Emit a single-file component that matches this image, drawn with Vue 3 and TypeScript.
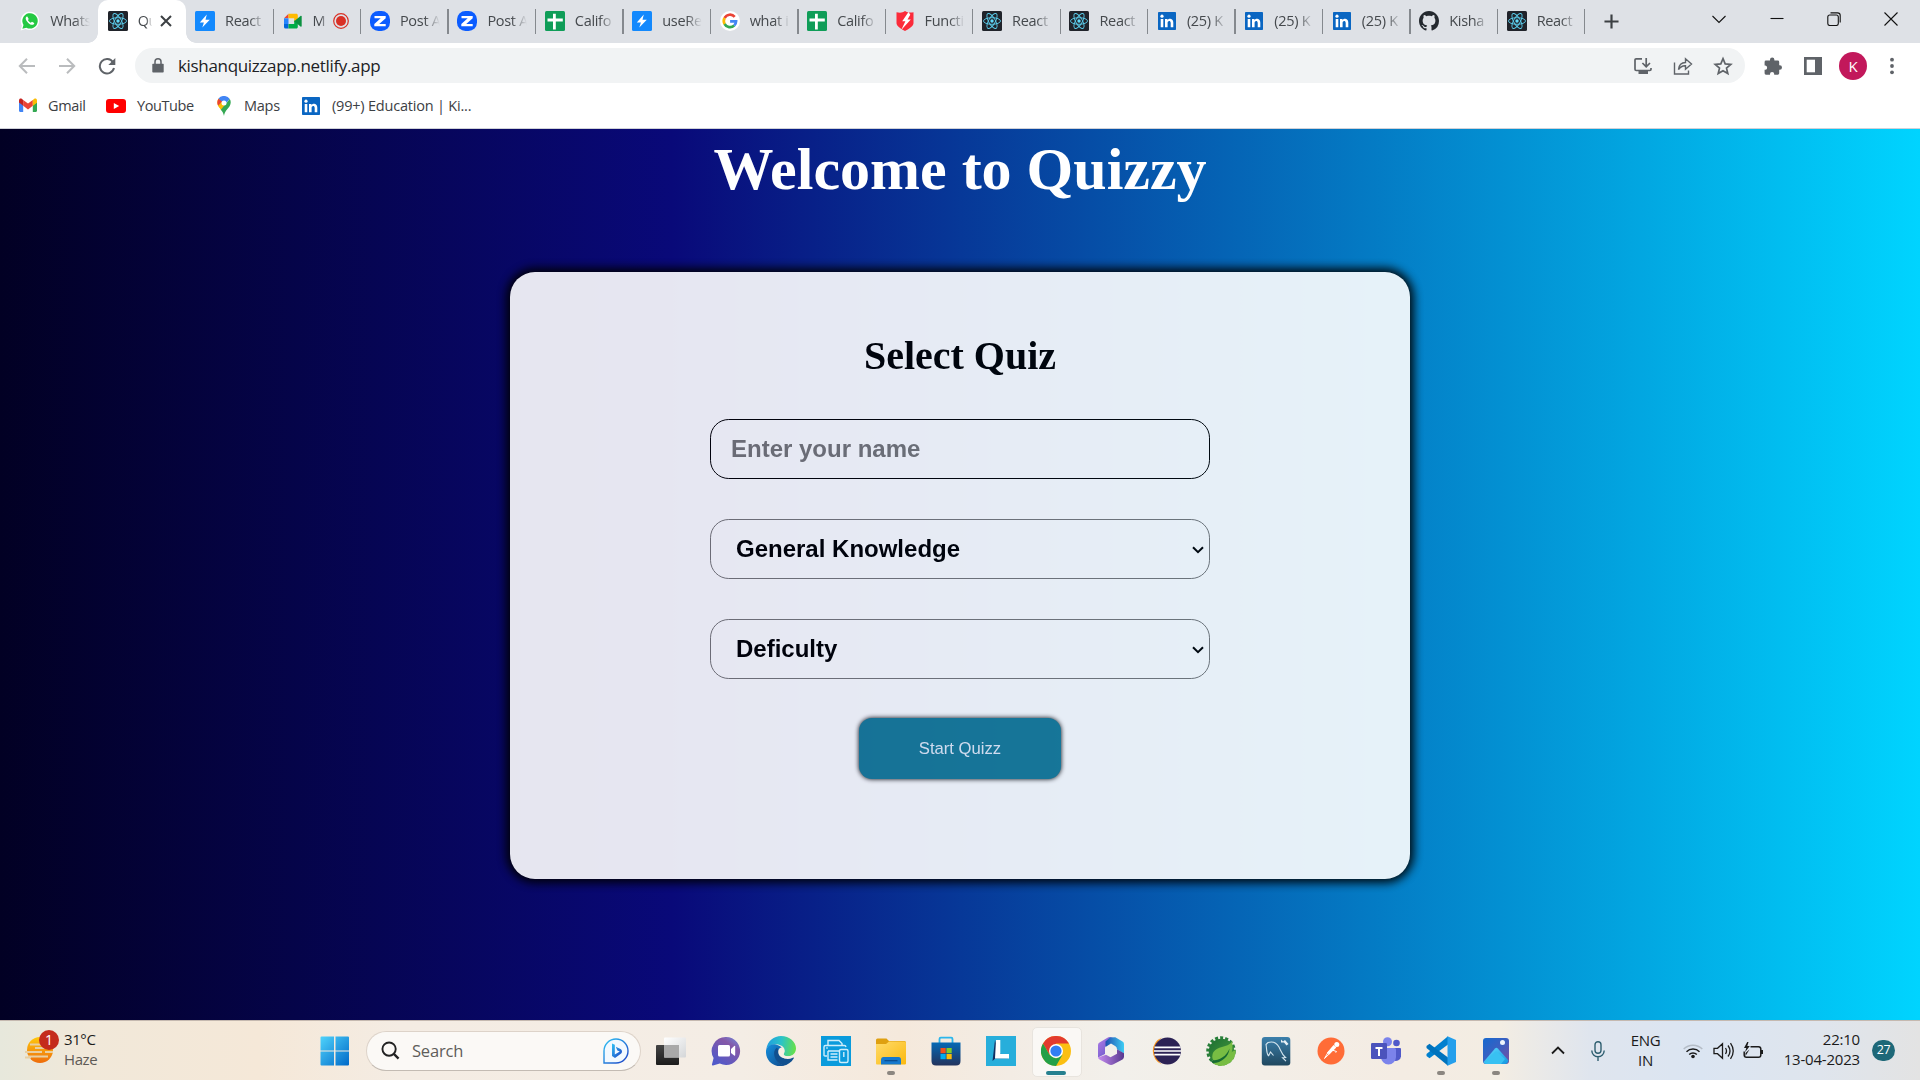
<script setup lang="ts">
import { ref } from 'vue'

interface Tab { icon: string; title: string; active?: boolean; recording?: boolean }
interface Bookmark { icon: string; label: string; width: number }
interface Pinned { icon: string; active?: boolean; running?: boolean }

const tabs: Tab[] = [
  { icon: 'whatsapp', title: 'Whats' },
  { icon: 'react', title: 'Qu', active: true },
  { icon: 'bolt', title: 'React' },
  { icon: 'meet', title: 'M', recording: true },
  { icon: 'zed', title: 'Post A' },
  { icon: 'zed', title: 'Post A' },
  { icon: 'sheets', title: 'Califo' },
  { icon: 'bolt', title: 'useRe' },
  { icon: 'google', title: 'what i' },
  { icon: 'sheets', title: 'Califo' },
  { icon: 'shield', title: 'Functi' },
  { icon: 'react', title: 'React' },
  { icon: 'react', title: 'React' },
  { icon: 'linkedin', title: '(25) K' },
  { icon: 'linkedin', title: '(25) K' },
  { icon: 'linkedin', title: '(25) K' },
  { icon: 'github', title: 'Kisha' },
  { icon: 'react', title: 'React' },
]

const bookmarks: Bookmark[] = [
  { icon: 'gmail', label: 'Gmail', width: 18 },
  { icon: 'youtube', label: 'YouTube', width: 20 },
  { icon: 'maps', label: 'Maps', width: 18 },
  { icon: 'linkedin', label: '(99+) Education | Ki...', width: 20 },
]

const pinned: Pinned[] = [
  { icon: 'taskview' }, { icon: 'chat' }, { icon: 'edge' }, { icon: 'printer' },
  { icon: 'folder', running: true }, { icon: 'store' }, { icon: 'lapp' },
  { icon: 'chrome', active: true }, { icon: 'm365' }, { icon: 'eclipse' },
  { icon: 'spring' }, { icon: 'mysql' }, { icon: 'postman' }, { icon: 'teams' },
  { icon: 'vscode', running: true }, { icon: 'photos', running: true },
]

const name = ref('')
const category = ref('General Knowledge')
const difficulty = ref('Deficulty')
</script>

<template>
  <div class="screen">
    <svg class="sprite" aria-hidden="true">
      <defs>
        <linearGradient id="gWin" x1="0" y1="0" x2="1" y2="1"><stop offset="0" stop-color="#4fd3fb" /><stop offset="1" stop-color="#0069c8" /></linearGradient>
        <linearGradient id="gChat" x1="1" y1="0" x2="0.3" y2="1"><stop offset="0" stop-color="#6f8fe0" /><stop offset=".35" stop-color="#8458a8" /><stop offset="1" stop-color="#5059c9" /></linearGradient>
        <linearGradient id="gEdge" x1="0" y1=".3" x2="1" y2=".4"><stop offset="0" stop-color="#1f9de0" /><stop offset=".5" stop-color="#2bc3c8" /><stop offset="1" stop-color="#66e04a" /></linearGradient>
        <linearGradient id="gEdge2" x1="0" y1="0" x2="1" y2="1"><stop offset="0" stop-color="#1490df" /><stop offset="1" stop-color="#114a8b" /></linearGradient>
        <linearGradient id="gFold" x1="0" y1="0" x2="1" y2="1"><stop offset="0" stop-color="#ffdb6b" /><stop offset="1" stop-color="#fbb90e" /></linearGradient>
        <linearGradient id="gStore" x1="0" y1="0" x2="0" y2="1"><stop offset="0" stop-color="#0669b5" /><stop offset="1" stop-color="#23335d" /></linearGradient>
        <linearGradient id="gMsA" x1="0" y1="0" x2="1" y2="1"><stop offset="0" stop-color="#b07be6" /><stop offset="1" stop-color="#5b52c4" /></linearGradient>
        <linearGradient id="gMsB" x1="0" y1="0" x2="1" y2="0"><stop offset="0" stop-color="#1e4fb0" /><stop offset="1" stop-color="#3ecdf4" /></linearGradient>
        <linearGradient id="gMsC" x1="0" y1="0" x2="1" y2="0"><stop offset="0" stop-color="#c68cf0" /><stop offset="1" stop-color="#57398f" /></linearGradient>
        <linearGradient id="gSql" x1="0" y1="0" x2="0" y2="1"><stop offset="0" stop-color="#3b7fab" /><stop offset="1" stop-color="#20485f" /></linearGradient>
        <linearGradient id="gSun" x1="0" y1="0" x2="0" y2="1"><stop offset="0" stop-color="#ffc90e" /><stop offset="1" stop-color="#ee6c0b" /></linearGradient>
        <linearGradient id="gPhoto" x1="0" y1="0" x2="1" y2="1"><stop offset="0" stop-color="#1569cf" /><stop offset=".5" stop-color="#3c5fc0" /><stop offset="1" stop-color="#7a4fa0" /></linearGradient>
        <linearGradient id="gMount" x1="0" y1="0" x2="1" y2="1"><stop offset="0" stop-color="#5fdcff" /><stop offset="1" stop-color="#1497e0" /></linearGradient>
        <linearGradient id="gBing" x1="0" y1="0" x2="1" y2="1"><stop offset="0" stop-color="#2fc3f4" /><stop offset="1" stop-color="#1d3fc4" /></linearGradient>
        <linearGradient id="gWhite" x1="0" y1="0" x2="1" y2="1"><stop offset="0" stop-color="#ffffff" /><stop offset="1" stop-color="#d4d6d8" /></linearGradient>
        <linearGradient id="gDark" x1="0" y1="0" x2="0" y2="1"><stop offset="0" stop-color="#444444" /><stop offset="1" stop-color="#1c1c1c" /></linearGradient>
        <linearGradient id="gLeaf" x1="0" y1="0" x2="1" y2="1"><stop offset="0" stop-color="#1b6f33" /><stop offset="1" stop-color="#4c9c3c" /></linearGradient>
      </defs>

      <symbol id="whatsapp" viewBox="0 0 20 20"><path d="M.6 19.5 2 14.6A9.2 9.2 0 1 1 5.6 18Z" fill="#fff" /><path d="M2.400 17.700 3.500 14A7.700 7.700 0 1 1 6.400 16.700Z" fill="#25c943" /><path d="M7.300 5.600c-.4-.1-1.600.5-1.600 2 0 1.400 1.200 3 2.600 4.300 1.500 1.400 3.300 2.200 4.600 1.800.9-.3 1.500-1.200 1.300-1.800l-2.200-1.100c-.5.2-.7 1-1.200 1-1.200-.4-2.600-1.800-2.900-2.700 0-.4.7-.7.8-1.200Z" fill="#fff" /></symbol>
      <symbol id="react" viewBox="0 0 20 20"><rect width="20" height="20" rx="1.500" fill="#20232a" /><g fill="none" stroke="#5ccfee" stroke-width=".9"><ellipse cx="10" cy="10" rx="8.500" ry="3.300" /><ellipse cx="10" cy="10" rx="8.500" ry="3.300" transform="rotate(60 10 10)" /><ellipse cx="10" cy="10" rx="8.500" ry="3.300" transform="rotate(120 10 10)" /></g><circle cx="10" cy="10" r="1.700" fill="#61dafb" /></symbol>
      <symbol id="bolt" viewBox="0 0 20 20"><rect width="20" height="20" rx="1.500" fill="#1389fd" /><path d="M11.800 3.500 4.800 11.400h4.100L7.300 16.500l7.500-7.800h-4.300Z" fill="#fff" /></symbol>
      <symbol id="meet" viewBox="0 0 20 20"><path d="M1 7.300 5.500 2.800V7.300Z" fill="#ea4335" /><path d="M1 7.300h4.500v5.800H1Z" fill="#2684fc" /><path d="M1 13h4.500v4.500H2.500A1.500 1.500 0 0 1 1 16Z" fill="#0066da" /><path d="M5.500 2.800h7.800c.9 0 1.500.6 1.500 1.500v3.900l-3.600 2.900V7.300H5.500Z" fill="#ffba00" /><path d="M5.500 13h5.700V9.300l3.600 2.900V16c0 .9-.6 1.500-1.500 1.500H5.500Z" fill="#00ac47" /><path d="m11.200 10.200 6.300-5.300c.5-.4 1.200-.1 1.200.5v9.600c0 .6-.7.900-1.200.5Z" fill="#0b9140" /></symbol>
      <symbol id="zed" viewBox="0 0 20 20"><rect width="20" height="20" rx="8.500" fill="#0b5cff" /><path d="M4.500 5h11.200v2.300L9.200 13h6.500v2.300H4.300V13l6.400-5.700H4.500Z" fill="#fff" /></symbol>
      <symbol id="sheets" viewBox="0 0 20 20"><rect width="20" height="20" rx="1.500" fill="#0f9d58" /><path d="M8 2.700h2.800v4.900h7v2.800h-7v8.200H8v-8.200H2.500V7.600H8Z" fill="#fff" /></symbol>
      <symbol id="google" viewBox="0 0 20 20"><circle cx="10" cy="10" r="10" fill="#fff" /><g fill="none" stroke-width="2.700"><path d="M14.700 5.800A6.200 6.200 0 0 0 4.600 7" stroke="#ea4335" /><path d="M4.600 7a6.200 6.200 0 0 0 0 6.100" stroke="#fbbc05" /><path d="M4.600 13a6.200 6.200 0 0 0 9.600 1.600" stroke="#34a853" /><path d="M14.200 14.600a6 6 0 0 0 1.900-4.300h-6" stroke="#4285f4" /></g></symbol>
      <symbol id="shield" viewBox="0 0 20 20"><path d="M1.500 1.200c3 .8 6 .8 8.500-1.200 2.500 1.600 5.500 2 8.500 1.200v11c0 3-5 6-8.500 7.800C6.500 18.200 1.500 15.200 1.500 12.200Z" fill="#fb2b3a" /><path d="M13.500 1 7.200 10.200h3.200L6.200 19l9.600-10.600h-3.300l2.800-4.600Z" fill="#fff" /></symbol>
      <symbol id="linkedin" viewBox="0 0 20 20"><rect x="1" y="1" width="18" height="18" rx=".8" fill="#0a66c2" /><path d="M3.700 8h2.600v8.300H3.700ZM8 8h2.500v1.200c1.600-2.300 5.800-1.800 5.800 2.400v4.700h-2.600v-4.200c0-2.900-3.100-2.500-3.100-.1v4.300H8Z" fill="#fff" /><circle cx="5" cy="5.200" r="1.600" fill="#fff" /></symbol>
      <symbol id="github" viewBox="0 0 16 16"><path fill="#24292f" d="M8 0C3.580 0 0 3.580 0 8c0 3.540 2.290 6.530 5.470 7.590.4.070.55-.17.55-.38 0-.19-.01-.82-.01-1.490-2.010.37-2.530-.49-2.690-.94-.09-.23-.48-.94-.82-1.130-.28-.15-.68-.52-.01-.53.63-.01 1.080.58 1.230.82.72 1.210 1.870.87 2.330.66.07-.52.28-.87.51-1.070-1.780-.2-3.640-.89-3.640-3.950 0-.87.31-1.590.82-2.150-.08-.2-.36-1.020.08-2.120 0 0 .67-.21 2.200.82.64-.18 1.320-.27 2-.27s1.360.09 2 .27c1.530-1.040 2.200-.82 2.200-.82.44 1.100.16 1.920.08 2.120.51.56.82 1.270.82 2.150 0 3.070-1.870 3.750-3.650 3.950.29.25.54.73.54 1.480 0 1.070-.01 1.930-.01 2.200 0 .21.15.46.55.38A8.010 8.010 0 0 0 16 8c0-4.420-3.580-8-8-8Z" /></symbol>
      <symbol id="gmail" viewBox="0 0 18 18"><path d="M0 4v9.800c0 .7.500 1.200 1.200 1.200h3V7.500Z" fill="#4285f4" /><path d="M18 4v9.800c0 .7-.5 1.200-1.200 1.200h-3V7.500Z" fill="#34a853" /><path d="M13.800 3 18 3.400v2.200l-4.200 3.200Z" fill="#fbbc04" /><path d="M4.200 8.800V3L9 6.500 13.800 3v5.800L9 12.400Z" fill="#ea4335" /><path d="M0 3.600C0 1.500 1.800 1.100 3 2l1.200 1v5.800L0 5.600Z" fill="#c5221f" /><path d="M18 3.600c0-2.100-1.800-2.500-3-1.600l-1.200 1v5.800L18 5.600Z" fill="#fbbc04" /></symbol>
      <symbol id="youtube" viewBox="0 0 20 20"><rect y="3" width="20" height="14" rx="3" fill="#f00" /><path d="m7.800 7 5.400 3-5.400 3Z" fill="#fff" /></symbol>
      <symbol id="maps" viewBox="0 0 18 20"><path d="M3.100 9.500A6.900 6.900 0 0 1 3.500 2.600L8 6.500 4.500 12Z" fill="#fbbc04" /><path d="M3.500 2.600A7 7 0 0 1 14.800 3L8 10.500 6 6Z" fill="#4285f4" /><path d="M2.400 6c.2-1.500.4-2.300 1.100-3.300L8 6.300 3.200 9.800C2.500 8.600 2.300 7.400 2.400 6Z" fill="#ea4335" /><path d="m3.200 9.800 4-4.600 3.300 4L6 14Z" fill="#fbbc04" /><path d="M14.800 3c1.500 2.500 1 5-.2 7.200C12.800 13 9.700 15 9 20c-.6-3-1.800-4.500-3.200-6.200Z" fill="#34a853" /><circle cx="9" cy="7" r="2.500" fill="#fff" /></symbol>

      <symbol id="windows" viewBox="0 0 30 30"><path d="M.5 1.500q0-1 1-1H14v14H.5ZM15.500.5H28q1 0 1 1v13H15.500ZM.5 15.500H14v14H1.500q-1 0-1-1ZM15.500 15.500H29v13q0 1-1 1H15.500Z" fill="url(#gWin)" /></symbol>
      <symbol id="taskview" viewBox="0 0 30 30"><rect y="9" width="23" height="20" rx="1" fill="url(#gDark)" /><rect x="8" y="1.500" width="22" height="20" rx="1" fill="url(#gWhite)" /><rect x="8" y="9" width="15" height="12.500" fill="#a9a9a9" /></symbol>
      <symbol id="chat" viewBox="0 0 30 30"><path d="M15 1a14 14 0 1 1-6.200 26.500L2 29.500c-.8.200-1.300-.4-1-1.200L2.600 22A14 14 0 0 1 15 1Z" fill="url(#gChat)" /><rect x="7" y="9" width="12" height="11.500" rx="1.500" fill="#fff" /><path d="m20 13 3.200-3q1-.6 1 .6v8.400q0 1.200-1 .6L20 17Z" fill="#fff" /></symbol>
      <symbol id="edge" viewBox="0 0 30 30"><path d="M.3 13C1.500 5 8 0 15 0c8.500 0 15 6 15 12.300 0 4.800-3.600 8-8 8-3.500 0-5-1.200-4-2.800 1.400-2.300 1-6-3-8C9.500 6.700 3 8.500.3 13Z" fill="url(#gEdge)" /><path d="M.1 14C1 10 5.500 7.500 10 8.500c4 .9 6 3 6.500 5.200C9 13 7 21 14 27.500c1.500 1.300 3 2 4.500 2.200C8 32.500-1.200 24.500.1 14Z" fill="url(#gEdge2)" /><path d="M11 11.500C5.500 15 8 26 17 29.800c4.500-.7 8.400-3.500 10.700-7.300.4-.7-.2-1.200-.9-.8-6 3-13.800.2-13.800-7Z" fill="#11508f" /><path d="M15 11.500c2.800.8 4.300 3 2.600 6-.5 1.300 1 2.800 4.400 2.800 2 0 3-.3 4.500-1.200-3.500 4.500-12 4.200-13.900-1.200-.8-2.700-.2-5.600 2.400-6.400Z" fill="#f6eee4" /></symbol>
      <symbol id="printer" viewBox="0 0 30 30"><rect width="30" height="30" fill="#0a9bdc" /><g fill="none" stroke="#cfeefb" stroke-width="1.400"><path d="M7 9V4.500h11l3 3V9M6 20H4q-1 0-1-1v-8q0-1.500 1.500-1.500h19q1.200 0 1.500 1.500M7 15h11M7 15v9h9.500M9.500 18h7M9.500 21h7" /><rect x="18.500" y="13.500" width="8.500" height="13" rx="1.500" /><path d="M22.800 16v5" /></g><circle cx="6" cy="12" r=".8" fill="#fff" /></symbol>
      <symbol id="folder" viewBox="0 0 30 30"><path d="M0 4q0-1.500 1.500-1.500h9L13 5h15.500Q30 5 30 6.500V12H0Z" fill="#dfa010" /><path d="M0 8h10l3-2.500h15.500Q30 5.500 30 7v20.500q0 1-1 1H1q-1 0-1-1Z" fill="url(#gFold)" /><path d="M5 28.500V24q0-3 2.500-3h15q2.500 0 2.500 3v4.500Z" fill="#1679cd" /><path d="M8.500 24.700h13" stroke="#0a4a8c" stroke-width="1.200" /></symbol>
      <symbol id="store" viewBox="0 0 30 30"><path d="M8.500 7V3q0-1.300 1.300-1.300h10.400q1.300 0 1.300 1.300v4" fill="none" stroke="#2bb6ec" stroke-width="1.800" /><path d="M.5 6.500h29V25q0 4.500-4.500 4.500H5Q.5 29.500.5 25Z" fill="url(#gStore)" /><path d="M9.500 12h5.200v5.200H9.500Z" fill="#f1511b" /><path d="M15.500 12h5.200v5.200h-5.200Z" fill="#80cc28" /><path d="M9.500 18h5.200v5.200H9.500Z" fill="#00adef" /><path d="M15.500 18h5.200v5.200h-5.200Z" fill="#fbbc09" /></symbol>
      <symbol id="lapp" viewBox="0 0 30 30"><rect width="30" height="30" fill="#27aedb" /><path d="M9 4 6.500 25l2.800-2.500 12.700-.2 1-2.800-10-2Z" fill="#0f2f61" /><path d="M10 4h4.300v14H23v4.500H9Z" fill="#fff" /></symbol>
      <symbol id="chrome" viewBox="0 0 30 30"><circle cx="15" cy="15" r="15" fill="#fbbf12" /><path d="M2 7.500A15 15 0 0 1 28 7.500H15L8.500 18.800Z" fill="#e33b2e" /><path d="M2 7.500 8.500 18.800 15 22.500 21.500 18.800 15 30A15 15 0 0 1 2 7.500Z" fill="#23a048" /><circle cx="15" cy="15" r="7" fill="#fff" /><circle cx="15" cy="15" r="5.600" fill="#317ef3" /></symbol>
      <symbol id="m365" viewBox="0 0 30 30"><path d="M11 2 3.500 6.500Q2 7.400 2 9v12.500l7-3.500v-6q0-2 1.600-3L19 3.500l-2.500-1.700q-2.700-1.600-5.500.2Z" fill="url(#gMsA)" /><path d="m14 1.500 5.300-.3L26.500 5.500Q28 6.400 28 8v9.500l-7-4.300q0-2-1.500-3L15 7.500 9.500 11V5.500Z" fill="url(#gMsB)" /><path d="m2 21.500 8-2.700 4.500 2.500 6.500-3.500v-4.500l7 4v3.500q0 1.700-1.500 2.600L17.500 28.300q-2.500 1.500-5 0L3.500 23.500Q2 22.700 2 21.500Z" fill="url(#gMsC)" /></symbol>
      <symbol id="eclipse" viewBox="0 0 30 30"><path d="M11 1.500A14.500 14.500 0 0 0 11 28.500 17 17 0 0 1 11 1.500Z" fill="#f7941e" /><circle cx="16.500" cy="15" r="13.500" fill="#2c2255" /><path d="M3.500 11.300h26M3 15h27M3.500 18.700h26" stroke="#fff" stroke-width="1.700" /></symbol>
      <symbol id="spring" viewBox="0 0 30 30"><circle cx="15" cy="15" r="13" fill="none" stroke="#287f39" stroke-width="3.500" stroke-dasharray="3 2" /><circle cx="15.500" cy="15.500" r="12.800" fill="url(#gLeaf)" /><path d="M29.500 14A14.500 14.500 0 0 1 6 26.500Z" fill="#78bd43" /><path d="M26 4.500C25 12 9 9 6.500 18.500c-.8 3.500.4 5.500 2 6.200C16 27.500 29 25 26 4.500Z" fill="#78bd43" /><path d="M4.500 24.500C13 25 20.500 20.500 23.500 12.500 23 21 14.500 27.500 6.500 27Z" fill="#176b32" /></symbol>
      <symbol id="mysql" viewBox="0 0 30 30"><rect x=".8" y="1" width="28.500" height="28.500" rx="3" fill="url(#gSql)" /><path d="M7.500 20C5 17 6 13 5 8.500l2-2c5-1.500 9 1 11 4.500 2 4 2.500 7 6.500 10.500l-3 .2 3.500 3.500M7.500 20l2-4 3 3.500" fill="none" stroke="#d5e6ef" stroke-width="1.100" /><path d="m20 3.500 2 2 2-1.500 3.500 4-2 1.500-2.500-3-3 0Z" fill="#e8f0f5" /></symbol>
      <symbol id="postman" viewBox="0 0 30 30"><circle cx="15" cy="15" r="13.500" fill="#ff6c37" /><path d="m17.500 9 2.800 2.500-7 7-2.300-1.700Z" fill="#fff" /><circle cx="20.800" cy="8.500" r="2.500" fill="#fff" /><path d="m8.500 22.500 4-7 1.200 2ZM16 14l4.500 1.500-.8 1.200" fill="none" stroke="#fff" stroke-width="1" /></symbol>
      <symbol id="teams" viewBox="0 0 30 30"><circle cx="25.500" cy="7" r="3.300" fill="#5059c9" /><path d="M20 12h9q1 0 1 1v7.500a5 5 0 0 1-8 3.500Z" fill="#5059c9" /><circle cx="16.500" cy="5.700" r="4.500" fill="#7b83eb" /><path d="M10 12h13.500q1.500 0 1.500 1.500V21a7.500 7.500 0 0 1-15 0Z" fill="#7b83eb" /><rect x="0" y="7" width="16" height="16" rx="1.200" fill="#4b53bc" /><path d="M4.500 11h7v2H9v7H7v-7H4.500Z" fill="#fff" /></symbol>
      <symbol id="vscode" viewBox="0 0 30 30"><path d="m.5 20 3 2.300L22 8.500V.3L.5 18Z" fill="#0080cf" /><path d="M.5 10 3.500 7.700 22 21.500v8.200L.5 12Z" fill="#0073bd" /><path d="M21.500.3 30 4v22l-8.500 3.700Z" fill="#249fec" /></symbol>
      <symbol id="photos" viewBox="0 0 30 30"><rect x="2" y="2" width="26" height="26" rx="3" fill="url(#gPhoto)" /><path d="M2.500 26 14 12.500q1.300-1.500 2.800 0l10.700 12q-1 3.500-3.500 3.500H5q-2 0-2.500-2Z" fill="url(#gMount)" /><path d="M3 26.500 15 15l9 8-4 5H5Z" fill="#38c1f2" /><circle cx="21.500" cy="6.500" r="2.500" fill="#eef4fc" /></symbol>
    </svg>

    <header class="tabstrip">
      <div v-for="(tab, i) in tabs" :key="i" class="tab" :class="{ active: tab.active, plain: i === 0 }">
        <svg class="favicon"><use :href="'#' + tab.icon" /></svg>
        <span class="title" :class="{ short: tab.active || tab.recording }">{{ tab.title }}</span>
        <svg v-if="tab.active" class="tab-close" viewBox="0 0 12 12"><path d="m1 1 10 10M11 1 1 11" stroke="#3c4043" stroke-width="2" /></svg>
        <svg v-if="tab.recording" class="record" viewBox="0 0 16 16"><circle cx="8" cy="8" r="7.300" fill="none" stroke="#d93025" stroke-width="1.200" /><circle cx="8" cy="8" r="5" fill="#d93025" /></svg>
      </div>
      <svg class="new-tab" viewBox="0 0 16 16"><path d="M8 .5v15M.5 8h15" stroke="#3c4043" stroke-width="2.300" /></svg>
      <div class="window-controls">
        <svg viewBox="0 0 14 14"><path d="m.5 4 6.500 6.500L13.500 4" /></svg>
        <svg viewBox="0 0 14 14"><path d="M.5 6.500h13" /></svg>
        <svg viewBox="0 0 14 14"><rect x=".8" y="3" width="10.500" height="10.500" rx="2" /><path d="M3.500.9h7q2.700 0 2.700 2.700v7" /></svg>
        <svg viewBox="0 0 14 14"><path d="m.5.500 13 13M13.500.500l-13 13" /></svg>
      </div>
    </header>

    <div class="toolbar">
      <svg class="nav" viewBox="0 0 18 18"><path d="M17 9H2.500M9 1.800 1.800 9 9 16.200" stroke="#babcbe" /></svg>
      <svg class="nav" viewBox="0 0 18 18"><path d="M1 9h14.500M9 1.800 16.200 9 9 16.200" stroke="#babcbe" /></svg>
      <svg class="nav" viewBox="0 0 18 18"><path d="M15 5.200A7.200 7.200 0 1 0 16 11" stroke="#5f6368" /><path d="M17.300 1v7h-7Z" fill="#5f6368" /></svg>
      <div class="omnibox">
        <svg class="lock" viewBox="0 0 12 15"><path d="M1 5.800h10q.7 0 .7.700v7.200q0 .8-.8.800H1.100q-.8 0-.8-.8V6.500q0-.7.700-.7Z" fill="#5f6368" /><path d="M3 6V3.800a3 3 0 0 1 6 0V6" fill="none" stroke="#5f6368" stroke-width="1.500" /></svg>
        <span class="url">kishanquizzapp.netlify.app</span>
        <svg class="act" viewBox="0 0 20 20"><path d="M9 2.800H3.200q-1.200 0-1.200 1.200v9.300q0 1.200 1.200 1.200h13.600q1.200 0 1.200-1.200V12M13.200 2v8.500M9.400 7l3.800 3.800L17 7" /><path d="M5.500 14.500h9.500v3.500H5.500Z" fill="#5f6368" stroke="none" /></svg>
        <svg class="act" viewBox="0 0 20 20"><path d="M1.500 6.500V18h14v-3.500M5.500 13.500c.5-4.500 3-7 7-7V2.800l6 5.200-6 5.200V9.700c-3-.2-5 .8-7 3.800Z" stroke-width="1.400" /></svg>
        <svg class="act" viewBox="0 0 20 20"><path d="m10 2.700 2.200 5.200 5.600.5-4.300 3.700 1.300 5.500-4.800-2.900-4.800 2.900 1.300-5.500-4.300-3.700 5.600-.5Z" stroke-width="1.700" /></svg>
      </div>
      <svg class="ext" viewBox="0 0 20 20"><path d="M3 4.500h4V3.700a2.200 2.200 0 0 1 4.400 0v.8h3.400q1.400 0 1.400 1.400v3.400h.6a2.200 2.200 0 0 1 0 4.400h-.6v3.600q0 1.400-1.400 1.400h-3.600v-.7a2.100 2.100 0 0 0-4.200 0v.7H3q-1.400 0-1.400-1.400v-3.500h.8a2.200 2.200 0 0 0 0-4.300h-.8V5.900Q1.600 4.500 3 4.500Z" fill="#5f6368" /></svg>
      <svg class="ext" viewBox="0 0 20 20"><path d="M1 1h18v18H1Z" fill="#5f6368" /><path d="M3.700 3.700h8.300v12.600H3.700Z" fill="#fff" /></svg>
      <span class="avatar">K</span>
      <svg class="ext dots" viewBox="0 0 20 20"><g fill="#5f6368"><circle cx="10" cy="3.700" r="1.900" /><circle cx="10" cy="10" r="1.900" /><circle cx="10" cy="16.300" r="1.900" /></g></svg>
    </div>

    <nav class="bookmarks">
      <a v-for="b in bookmarks" :key="b.label" class="bookmark" :class="b.icon">
        <svg :width="b.width" height="20"><use :href="'#' + b.icon" /></svg><span>{{ b.label }}</span>
      </a>
    </nav>

    <main class="page">
      <h1>Welcome to Quizzy</h1>
      <section class="card">
        <h2>Select Quiz</h2>
        <input v-model="name" class="field" type="text" placeholder="Enter your name">
        <div class="field select">
          <span>{{ category }}</span>
          <svg viewBox="0 0 12 8"><path d="m1 1.200 5 5 5-5" fill="none" stroke="#000" stroke-width="2" /></svg>
        </div>
        <div class="field select">
          <span>{{ difficulty }}</span>
          <svg viewBox="0 0 12 8"><path d="m1 1.200 5 5 5-5" fill="none" stroke="#000" stroke-width="2" /></svg>
        </div>
        <button class="start">Start Quizz</button>
      </section>
    </main>

    <footer class="taskbar">
      <div class="weather">
        <div class="weather-icon">
          <svg viewBox="0 0 30 30"><circle cx="15" cy="15" r="13" fill="url(#gSun)" /><path d="M5 9.500h12M0 17h17M20 17h8M3 21.500h20M0 22.500h6M22 9.500h4M10 13h12" stroke="#e8cfa2" stroke-width="1.800" /></svg>
          <span>1</span>
        </div>
        <div class="weather-text"><b>31°C</b><i>Haze</i></div>
      </div>
      <svg class="start-logo"><use href="#windows" /></svg>
      <div class="search">
        <svg viewBox="0 0 20 20"><circle cx="8.500" cy="8.500" r="7" fill="none" stroke="#222" stroke-width="2" /><path d="m13.500 13.500 5 5" stroke="#222" stroke-width="2.400" /></svg>
        <span>Search</span>
        <svg class="bing" viewBox="0 0 26 26"><path d="M1 25V13A12 12 0 1 1 13 25Z" fill="#f2f9ff" stroke="url(#gBing)" stroke-width="1.400" /><path d="m9 5.500 2.800 1.200v9.800l5-2.900-2.500-1.200-1.500-3.700 4.700 2.300q1.500 1 1.500 2.400 0 1.700-1.500 2.600L12 20l-3-2Z" fill="url(#gBing)" /></svg>
      </div>
      <div class="apps">
        <div v-for="p in pinned" :key="p.icon" class="app" :class="{ current: p.active, running: p.running }">
          <svg><use :href="'#' + p.icon" /></svg>
        </div>
      </div>
      <div class="tray">
        <svg class="t-chev" viewBox="0 0 14 9"><path d="m1 7.500 6-6 6 6" stroke="#1b1b1b" stroke-width="1.800" fill="none" /></svg>
        <svg class="t-mic" viewBox="0 0 14 20"><g fill="none" stroke="#2f5f70" stroke-width="1.400"><rect x="4" y=".7" width="6" height="11.500" rx="3" /><path d="M.8 9.500a6.200 6.200 0 0 0 12.400 0M7 15.700V20" /></g></svg>
        <div class="lang"><span>ENG</span><span>IN</span></div>
        <svg class="t-wifi" viewBox="0 0 20 16"><g fill="none" stroke="#1b1b1b" stroke-width="1.500"><path d="M.7 6a13.200 13.200 0 0 1 18.600 0" stroke="#b4bcc6" /><path d="M3.500 8.800a9.200 9.200 0 0 1 13 0M6.200 11.500a5.400 5.400 0 0 1 7.600 0" /></g><circle cx="10" cy="13.500" r="1.800" fill="#1b1b1b" /></svg>
        <svg class="t-vol" viewBox="0 0 21 18"><path d="M1 6.300h3.500l5-4.500v14.400l-5-4.500H1ZM12.500 6q2 3 0 6M15 3.500q4 5.500 0 11M17.500 1.200q5.500 7.800 0 15.600" fill="none" stroke="#1b1b1b" stroke-width="1.300" /></svg>
        <svg class="t-bat" viewBox="0 0 21 17"><path d="M7.500 4.700h8q2.300 0 2.300 2.300v6q0 2.300-2.300 2.300h-12q-2.300 0-2.300-2.300V9.500M18.500 8v4" fill="none" stroke="#1b1b1b" stroke-width="1.500" /><path d="M4.200 0 1 6h2.300L2 10.200 6.800 4H4.300L5.500 0ZM2.500 14V11l4-3.500ZM18 8h2v4h-2Z" fill="#1b1b1b" /></svg>
        <div class="clock"><span>22:10</span><span>13-04-2023</span></div>
        <span class="count">27</span>
      </div>
    </footer>
  </div>
</template>

<style>
html, body { margin: 0; overflow: hidden; }
</style>

<style scoped>
.screen { width: 1920px; height: 1080px; display: flex; flex-direction: column; overflow: hidden; background: #fff; font-family: "Open Sans", "Noto Sans", sans-serif; color: #3c4043; }
.screen * { box-sizing: border-box; }
svg { display: block; flex: none; }
.sprite { position: absolute; width: 0; height: 0; }

.tabstrip { height: 43px; flex: none; background: #dee1e6; display: flex; padding-left: 11px; }
.tab { position: relative; width: 87.440px; flex: none; height: 43px; padding: 11px 0 0 9.200px; display: flex; align-items: flex-start; }
.tab::after { content: ""; position: absolute; right: -.6px; top: 9px; width: 1.300px; height: 25px; background: #85898e; }
.tab.plain::after { display: none; }
.favicon { width: 20px; height: 20px; }
.title { width: 42px; margin-left: 10px; height: 20px; font-size: 14.500px; line-height: 20px; letter-spacing: -.3px; white-space: nowrap; color: #45494d; mask-image: linear-gradient(90deg, #000 58%, transparent 95%); }
.title.short { width: 20px; mask-image: linear-gradient(90deg, #000 40%, transparent 72%); }
.tab.active { background: #fff; border-radius: 10px 10px 0 0; }
.tab.active::before, .tab.active::after { content: ""; display: block; position: absolute; top: auto; bottom: 0; width: 10px; height: 10px; }
.tab.active::before { left: -10px; background: radial-gradient(circle at 0 0, transparent 9.500px, #fff 10px); }
.tab.active::after { right: -10px; background: radial-gradient(circle at 100% 0, transparent 9.500px, #fff 10px); }
.tab-close { width: 12px; height: 12px; margin: 4px 0 0 2.500px; }
.record { width: 16px; height: 16px; margin: 2px 0 0 .3px; }
.new-tab { width: 15px; height: 15px; margin: 14px 0 0 19.500px; }
.window-controls { margin-left: auto; display: flex; gap: 43.200px; padding: 12px 22px 0 0; }
.window-controls svg { width: 14px; height: 14px; fill: none; stroke: #111; stroke-width: 1.100; }

.toolbar { height: 45px; flex: none; display: flex; align-items: center; padding: 0 18px; }
.nav { width: 18px; height: 18px; margin-right: 22px; fill: none; stroke-width: 2; }
.omnibox { width: 1610px; height: 35px; margin-left: -3px; border-radius: 18px; background: #f1f3f4; display: flex; align-items: center; padding: 0 12px 0 16.500px; }
.lock { width: 12px; height: 15px; }
.url { margin: -1px auto 0 14.500px; font-size: 17px; letter-spacing: -.33px; color: #202124; }
.act { width: 20px; height: 20px; margin-left: 20px; fill: none; stroke: #5f6368; stroke-width: 1.700; }
.ext { width: 20px; height: 20px; margin-left: 20px; }
.omnibox + .ext { margin-left: 18px; }
.avatar { width: 28px; height: 28px; margin-left: 16px; border-radius: 50%; background: #c2185b; color: #fff; font-size: 15px; line-height: 28px; text-align: center; }
.dots { margin-left: 15px; }

.bookmarks { height: 41px; flex: none; display: flex; align-items: center; padding: 0 0 4px 19px; border-bottom: 1px solid #cfd1d8; font-size: 14.500px; letter-spacing: -.25px; white-space: nowrap; }
.bookmark { display: flex; align-items: center; gap: 11px; }
.bookmark span { padding-bottom: 2px; }
.bookmark.gmail { width: 87px; letter-spacing: -.35px; }
.bookmark.youtube { width: 109px; letter-spacing: -.4px; }
.bookmark.maps { width: 86px; }
.bookmark.linkedin { letter-spacing: -.2px; }

.page { height: 891px; flex: none; background: linear-gradient(90deg, #020024 0%, #090979 35%, #00d4ff 100%); display: flex; flex-direction: column; align-items: center; font-family: "Liberation Serif", serif; }
h1 { margin: 6px 0 68px; font-size: 60px; line-height: 69px; color: #fff; }
.card { width: 900px; height: 607px; border-radius: 25px; background: #fff; opacity: .9; box-shadow: 0 0 10px 4px #000; display: flex; flex-direction: column; align-items: center; }
h2 { margin: 61px 0 40px; font-size: 40px; line-height: 46px; color: #000; }
.field { width: 500px; height: 60px; margin: 0 0 40px; border: 1px solid #000; border-radius: 18.750px; background: transparent; font: bold 24px "Liberation Sans", sans-serif; outline: none; padding: 0 20px; color: #000; }
.field::placeholder { color: #757575; opacity: 1; }
.select { display: flex; align-items: center; justify-content: space-between; border-color: #767676; padding: 0 5px 0 25px; }
.select svg { width: 12px; height: 8px; margin-top: 2px; }
.start { width: 202px; height: 61px; margin-top: -1px; border: 0; border-radius: 13px; background: #187b98; box-shadow: 0 0 5px #000; color: #e5edf8; font: 16.667px "Liberation Sans", sans-serif; }

.taskbar { height: 60px; flex: none; border-top: 1px solid #c5b9b0; display: flex; align-items: center; background: linear-gradient(90deg, #e7e8dc 0, #f1e8d9 90px, #f5e8d8 260px, #f4ece3 400px, #f4ede5 740px, #f5e9dc 900px, #f3ece4 1010px, #f2f0eb 1120px, #f4ece3 1400px, #f3ede3 1500px, #dfe5ee 1590px, #dbe5f2 1700px, #dfe5ed 1820px, #e3e3e3 1920px); }
.weather { width: 319.500px; display: flex; padding-left: 25px; }
.weather-icon { position: relative; width: 30px; }
.weather-icon svg { width: 30px; height: 30px; margin-top: 3px; }
.weather-icon span { position: absolute; left: 14px; top: -2px; width: 20px; height: 20px; border-radius: 50%; background: #c42b1c; color: #fff; font-size: 14px; line-height: 20px; text-align: center; }
.weather-text { margin: -3px 0 0 9px; font-size: 15px; line-height: 20px; letter-spacing: -.4px; }
.weather-text b, .weather-text i { display: block; font-style: normal; font-weight: 400; color: #1b1b1b; }
.weather-text i { color: #5e5a55; }
.start-logo { width: 30px; height: 30px; }
.search { width: 275px; height: 40px; margin-left: 16px; border: 1px solid #ddd3c9; border-bottom-color: #c3bbb3; border-radius: 20px; background: #fbf9f6; display: flex; align-items: center; padding: 0 11px 0 14px; }
.search svg { width: 19px; height: 19px; }
.search span { margin-left: 12.500px; font-size: 16.500px; letter-spacing: -.2px; color: #605d5a; }
.search .bing { width: 26px; height: 26px; margin-left: auto; }
.apps { display: flex; margin-left: 2.500px; }
.app { position: relative; width: 55px; height: 48px; display: flex; align-items: center; justify-content: center; }
.app svg { width: 30px; height: 30px; position: relative; }
.app.current::before { content: ""; position: absolute; left: 3.500px; top: 0; width: 48px; height: 48px; border-radius: 5px; background: #faf8f5; border: 1px solid #e8e4de; }
.app.current::after, .app.running::after { content: ""; position: absolute; bottom: 0; left: 50%; width: 8px; height: 4px; margin-left: -4px; border-radius: 2px; background: #8b8680; }
.app.current::after { width: 20px; margin-left: -10px; background: #26808f; }
.tray { flex: 1; display: flex; align-items: center; color: #1b1b1b; font-size: 15px; line-height: 20px; letter-spacing: -.3px; }
.tray > div { display: flex; flex-direction: column; padding-bottom: 2px; }
.t-chev { width: 14px; height: 9px; margin-left: 27.500px; }
.t-mic { width: 14px; height: 20px; margin-left: 26px; }
.lang { width: 40px; margin-left: 21px; align-items: center; }
.t-wifi { width: 20px; height: 16px; margin-left: 17px; }
.t-vol { width: 21px; height: 18px; margin-left: 10px; }
.t-bat { width: 21px; height: 17px; margin-left: 9px; }
.tray > .clock { width: 90px; margin-left: 6.500px; padding-bottom: 4px; align-items: flex-end; letter-spacing: -.2px; }
.count { width: 23px; height: 21px; margin: -1px 0 0 12px; border-radius: 11px; background: #1e6878; color: #fff; font-size: 12.500px; line-height: 20px; text-align: center; }
</style>
